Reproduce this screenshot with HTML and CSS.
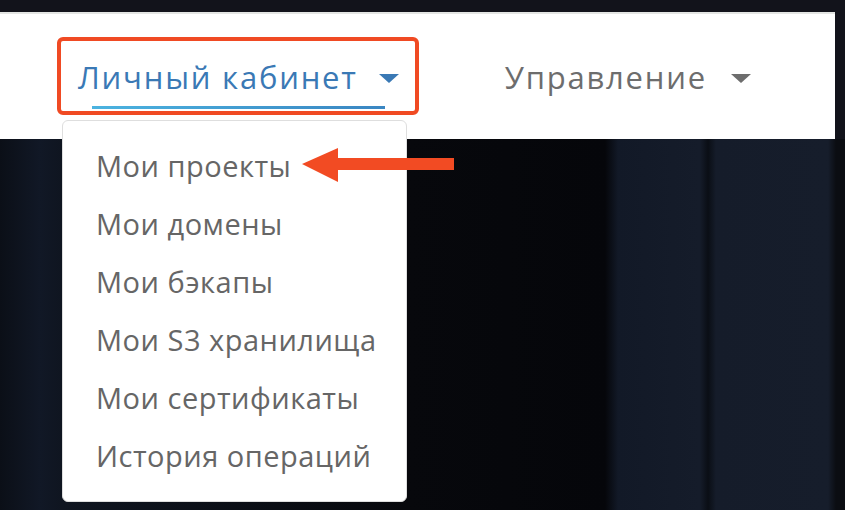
FILE: index.html
```html
<!DOCTYPE html>
<html lang="ru">
<head>
  <meta charset="UTF-8" />
  <meta name="viewport" content="width=device-width, initial-scale=1.0"/>
  <title>Личный кабинет</title>
  <link rel="stylesheet" href="styles.css">
</head>
<body>
  <div class="page">
    <header class="topbar">
      <nav class="menu">
        <div class="menu-item highlight">
          <a class="menu-link active" href="#">
            <span class="menu-row">Личный кабинет <span class="caret"></span></span>
            <span class="underline"></span>
          </a>
          <ul class="dropdown">
            <li><a href="#">Мои проекты</a></li>
            <li><a href="#">Мои домены</a></li>
            <li><a href="#">Мои бэкапы</a></li>
            <li><a href="#">Мои S3 хранилища</a></li>
            <li><a href="#">Мои сертификаты</a></li>
            <li><a href="#">История операций</a></li>
          </ul>
          <svg class="pointer" width="152" height="34" viewBox="0 0 152 34">
            <polygon points="0,16 36,0 36,10 152,10 152,22 36,22 36,34" fill="#f24b23"/>
          </svg>
        </div>
        <div class="menu-item">
          <a class="menu-link" href="#">
            <span class="menu-row">Управление <span class="caret"></span></span>
          </a>
        </div>
      </nav>
    </header>
    <div class="hero"></div>
  </div>
</body>
</html>
```

FILE: styles.css
```css
body {
  margin: 0;
  font-family: "Open Sans", "DejaVu Sans", sans-serif;
  background-color: #12131b;
  height: 100vh;
  overflow: hidden;
}
.page {
  display: flex;
  flex-direction: column;
  height: 100%;
  padding-top: 12px;
  box-sizing: border-box;
}
.topbar {
  width: 835px;
  height: 127px;
  box-sizing: border-box;
  background-color: white;
  border-top: 2px solid #e3e5e3;
  position: relative;
  z-index: 2;
}
.menu {
  display: flex;
  align-items: flex-start;
  padding: 23px 0 0 57px;
}
.menu-item {
  position: relative;
}
.highlight {
  border: 4px solid #f04a23;
  border-radius: 6px;
}
.menu-link {
  display: flex;
  flex-direction: column;
  text-decoration: none;
  color: #6d6d6d;
  font-size: 31px;
  letter-spacing: 1.8px;
  line-height: 40px;
  padding: 16px 16px 2px 17px;
}
.menu-link.active {
  color: #3a79b5;
}
.menu-row {
  display: flex;
  align-items: center;
  white-space: nowrap;
}
.caret {
  width: 0;
  height: 0;
  border-left: 10px solid transparent;
  border-right: 10px solid transparent;
  border-top: 9px solid currentColor;
  margin-left: 21px;
  margin-top: 2px;
}
.underline {
  display: block;
  width: 293px;
  height: 3px;
  margin: 9px auto 0 auto;
  background: linear-gradient(90deg, #4bb3e0, #3a86c2);
}
.menu-item + .menu-item {
  margin-left: 69px;
  margin-top: 4px;
}
.menu-item + .menu-item .caret {
  margin-left: 24px;
}
.dropdown {
  position: absolute;
  top: 79px;
  left: 1px;
  width: 345px;
  box-sizing: border-box;
  margin: 0;
  padding: 16px 0;
  list-style: none;
  background-color: white;
  border: 1px solid #dedede;
  border-radius: 6px;
}
.dropdown a {
  display: block;
  padding-left: 33px;
  line-height: 58px;
  font-size: 29px;
  letter-spacing: 0.5px;
  color: #666666;
  text-decoration: none;
  white-space: nowrap;
}
.pointer {
  position: absolute;
  top: 107px;
  left: 241px;
}
.hero {
  flex-grow: 1;
  background: linear-gradient(90deg, #0b0f17 0px, #111826 40px, #0f1520 62px, #07080c 407px, #05060a 605px, #121927 618px, #151c2a 700px, #0a0e15 708px, #151c2a 716px, #161d2b 828px, #0b0d12 836px, #0b0d12 845px);
}
```
